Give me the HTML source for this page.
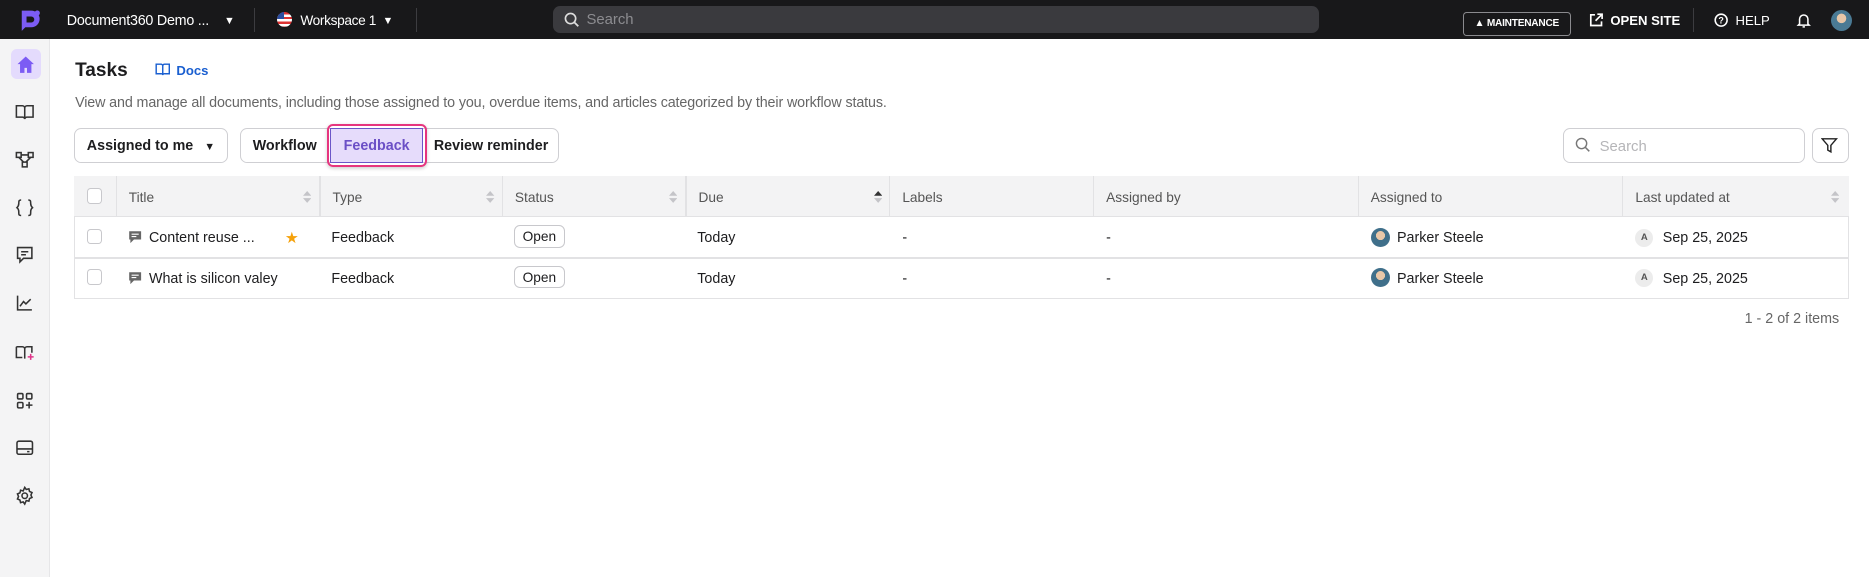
<!DOCTYPE html>
<html><head><meta charset="utf-8"><style>
*{box-sizing:border-box;margin:0;padding:0}
html,body{width:1869px;height:577px;overflow:hidden;background:#fff}
#z{zoom:1.19196;width:1568px;height:484px;position:relative;font-family:"Liberation Sans",sans-serif;color:#1d1d1f;overflow:hidden}
.abs{position:absolute}
.top{left:0;top:0;width:1568px;height:33px;background:#18181a;color:#fff}
.top .t{position:absolute;top:11px;font-size:12px;white-space:nowrap}
.sep{position:absolute;top:7px;width:1px;height:20px;background:#3c3c40}
.side{left:0;top:33px;width:42px;height:451px;background:#f4f4f5;border-right:1px solid #e6e6e8}
.ic{position:absolute;left:12px;width:18px;height:18px}
.btn{position:absolute;top:107px;height:30px;border:1px solid #cfcfd3;border-radius:6px;background:#fff;font-size:12px;font-weight:bold;line-height:29px}
.th{position:absolute;top:149px;height:34px;line-height:34px;font-size:11.5px;color:#555}
.cell{position:absolute;font-size:12px;color:#1d1d1f;white-space:nowrap}
.vl{position:absolute;top:148px;width:1px;height:34px;background:#e2e2e4}
.hl{position:absolute;left:62px;width:1489px;height:1px;background:#e2e2e4}
.cb{position:absolute;left:73px;width:13px;height:13px;border:1px solid #c8c8cc;border-radius:3px;background:#fff}
.sort{position:absolute;width:7px;height:10px}
.open{position:absolute;left:431px;height:19px;width:43px;border:1px solid #c8c8cc;border-radius:5px;font-size:11.5px;line-height:18px;text-align:center}
.av{position:absolute;left:1150px;width:16px;height:16px;border-radius:50%;background:radial-gradient(circle at 50% 40%,#e8c7a8 0 30%,#3f6f8a 31%)}
.aa{position:absolute;left:1372px;width:15px;height:15px;border-radius:50%;background:#ececec;font-size:8px;font-weight:bold;color:#555;text-align:center;line-height:15px}
</style></head><body><div id="z">
<div class="abs top">
 <svg class="abs" style="left:14px;top:6px" width="22" height="22" viewBox="0 0 22 22"><path d="M4 3h8a7 7 0 0 1 0 14H7l-3 3z" fill="#7c5cf4"/><path d="M8 8h4a2 2 0 0 1 0 5H8z" fill="#18181a"/><circle cx="17" cy="5" r="2.2" fill="#7c5cf4"/></svg>
 <span class="t" style="left:56px;letter-spacing:-0.2px">Document360 Demo ...</span>
 <span class="t" style="left:188px;font-size:9px;top:13px">▼</span>
 <div class="sep" style="left:213px"></div>
 <div class="abs" style="left:232px;top:10px;width:13px;height:13px;border-radius:50%;overflow:hidden;background:repeating-linear-gradient(#d33 0 2px,#fff 2px 4px)"><div style="width:6px;height:6px;background:#2b4ea0"></div></div>
 <span class="t" style="left:252px;font-size:11.5px;letter-spacing:-0.3px">Workspace 1</span>
 <span class="t" style="left:321px;font-size:9px;top:13px">▼</span>
 <div class="sep" style="left:349px"></div>
 <div class="abs" style="left:464px;top:5px;width:643px;height:23px;background:#3a3a3e;border-radius:6px"></div>
 <svg class="abs" style="left:473px;top:10px" width="13" height="13" viewBox="0 0 13 13"><circle cx="5.5" cy="5.5" r="4.3" stroke="#ddd" stroke-width="1.4" fill="none"/><path d="M8.7 8.7 12 12" stroke="#ddd" stroke-width="1.5"/></svg>
 <span class="t" style="left:492px;top:10px;color:#8c8c90;font-size:12.5px">Search</span>
 <div class="abs" style="left:1227px;top:10px;width:91px;height:20px;border:1px solid #8a8a8e;border-radius:3px;font-size:8.5px;font-weight:bold;line-height:18px;text-align:center;letter-spacing:-0.2px">▲ MAINTENANCE</div>
 <svg class="abs" style="left:1333px;top:11px" width="12" height="12" viewBox="0 0 12 12" fill="none" stroke="#fff" stroke-width="1.4"><path d="M5 1.5H1.5v9h9V7M7 1h4v4M11 1 5.5 6.5"/></svg>
 <span class="t" style="left:1351px;top:11px;font-size:11px;font-weight:bold">OPEN SITE</span>
 <div class="sep" style="left:1420px"></div>
 <svg class="abs" style="left:1438px;top:11px" width="12" height="12" viewBox="0 0 12 12"><circle cx="6" cy="6" r="5" stroke="#fff" stroke-width="1.3" fill="none"/><text x="6" y="9" font-size="7.5" text-anchor="middle" fill="#fff" font-family="Liberation Sans" font-weight="bold">?</text></svg>
 <span class="t" style="left:1456px;top:11px;font-size:11px">HELP</span>
 <svg class="abs" style="left:1507px;top:10px" width="13" height="14" viewBox="0 0 13 14" fill="none" stroke="#fff" stroke-width="1.3"><path d="M3 10V6a3.5 3.5 0 0 1 7 0v4l1 1H2zM5.5 12.5h2"/></svg>
 <div class="abs" style="left:1536px;top:8px;width:18px;height:18px;border-radius:50%;background:radial-gradient(circle at 50% 40%,#e8c7a8 0 28%,#4a7a94 30%)"></div>
</div>
<div class="abs side">
 <div class="abs" style="left:9px;top:8px;width:25px;height:25px;border-radius:5px;background:#e4dbfd"></div>
 <svg class="ic" style="top:12px;left:13px" width="17" height="17" viewBox="0 0 17 17"><path d="M8.5 2 2 8h2v7h3.5v-4h2v4H13V8h2z" fill="#7c5cf4"/></svg>
 <svg class="ic" style="top:52px" viewBox="0 0 18 18" fill="none" stroke="#333" stroke-width="1.3"><path d="M2 4h5a2 2 0 0 1 2 2v9a2 2 0 0 0-2-1.5H2zM16 4h-5a2 2 0 0 0-2 2v9a2 2 0 0 1 2-1.5h5z"/></svg>
 <svg class="ic" style="top:92px" viewBox="0 0 18 18" fill="none" stroke="#333" stroke-width="1.3"><rect x="2" y="3" width="4" height="4"/><rect x="12" y="3" width="4" height="4"/><rect x="7" y="11" width="4" height="4"/><path d="M6 5h6M4 7l4 4M14 7l-4 4"/></svg>
 <svg class="ic" style="top:132px" viewBox="0 0 18 18" fill="none" stroke="#333" stroke-width="1.3"><path d="M6 2.5c-2 0-2 1-2 3s-1.5 3.5-1.5 3.5S4 10 4 12.5 4 15.5 6 15.5M12 2.5c2 0 2 1 2 3s1.5 3.5 1.5 3.5S14 10 14 12.5s0 3-2 3"/></svg>
 <svg class="ic" style="top:172px" viewBox="0 0 18 18" fill="none" stroke="#333" stroke-width="1.3"><path d="M3 3h12v9H8l-3 3v-3H3zM6 6.5h6M6 9h4"/></svg>
 <svg class="ic" style="top:212px" viewBox="0 0 18 18" fill="none" stroke="#333" stroke-width="1.3"><path d="M3 3v12h12M5 12l3-4 2 2 4-4"/></svg>
 <svg class="ic" style="top:254px" viewBox="0 0 18 18" fill="none" stroke="#333" stroke-width="1.3"><path d="M2 4h5a2 2 0 0 1 2 2v8M2 4v9h5M9 6a2 2 0 0 1 2-2h4v5"/><path d="M14 10v5M11.5 12.5h5" stroke="#e0368a"/></svg>
 <svg class="ic" style="top:294px" viewBox="0 0 18 18" fill="none" stroke="#333" stroke-width="1.3"><rect x="3" y="3" width="4.5" height="4.5" rx="1"/><rect x="10.5" y="3" width="4.5" height="4.5" rx="1"/><rect x="3" y="10.5" width="4.5" height="4.5" rx="1"/><path d="M12.7 10v5.5M10 12.7h5.5"/></svg>
 <svg class="ic" style="top:334px" viewBox="0 0 18 18" fill="none" stroke="#333" stroke-width="1.3"><rect x="2.5" y="3.5" width="13" height="11" rx="1.5"/><path d="M2.5 10h13M11 12.3h2"/></svg>
 <svg class="ic" style="top:374px" viewBox="0 0 18 18" fill="none" stroke="#333" stroke-width="1.3"><circle cx="9" cy="9" r="2.3"/><path d="M9 2l1.3 1.8 2.2-.6.5 2.2 2.1.9-.9 2.1.9 2.1-2.1.9-.5 2.2-2.2-.6L9 16l-1.3-1.8-2.2.6-.5-2.2-2.1-.9.9-2.1-.9-2.1 2.1-.9.5-2.2 2.2.6z"/></svg>
</div>

<div class="abs" style="left:63px;top:50px;font-size:16px;font-weight:bold">Tasks</div>
<svg class="abs" style="left:130px;top:53px" width="13" height="11" viewBox="0 0 13 11" fill="none" stroke="#1a5fd0" stroke-width="1.2"><path d="M1 1h4a1.5 1.5 0 0 1 1.5 1.5V10A1.5 1.5 0 0 0 5 9H1zM12 1H8a1.5 1.5 0 0 0-1.5 1.5V10A1.5 1.5 0 0 1 8 9h4z"/></svg>
<div class="abs" style="left:148px;top:53px;font-size:11px;font-weight:bold;color:#1a5fd0">Docs</div>
<div class="abs" style="left:63px;top:80px;font-size:12px;color:#666;white-space:nowrap;letter-spacing:-0.1px">View and manage all documents, including those assigned to you, overdue items, and articles categorized by their workflow status.</div>

<div class="btn" style="left:62px;width:129px;padding-left:10px">Assigned to me <span style="font-size:9px;margin-left:6px">▼</span></div>
<div class="btn" style="left:201px;width:268px"></div>
<div class="abs" style="left:212px;top:116px;font-size:12px;font-weight:bold">Workflow</div>
<div class="abs" style="left:274px;top:104px;width:84px;height:36px;border:2px solid #e6357f;border-radius:5px;box-shadow:0 1px 3px rgba(0,0,0,.2)"></div>
<div class="abs" style="left:277px;top:107px;width:78px;height:30px;border:1px solid #6b56c8;background:#e6dcfb;color:#6b4fc6;font-size:12px;font-weight:bold;line-height:29px;text-align:center">Feedback</div>
<div class="abs" style="left:364px;top:116px;font-size:12px;font-weight:bold">Review reminder</div>

<div class="abs" style="left:1311px;top:107px;width:203px;height:30px;border:1px solid #cfcfd3;border-radius:6px"></div>
<svg class="abs" style="left:1321px;top:115px" width="13" height="13" viewBox="0 0 13 13"><circle cx="5.5" cy="5.5" r="4.3" stroke="#777" stroke-width="1.2" fill="none"/><path d="M8.7 8.7 12 12" stroke="#777" stroke-width="1.3"/></svg>
<div class="abs" style="left:1342px;top:117px;font-size:12.5px;color:#b5b5b8">Search</div>
<div class="abs" style="left:1520px;top:107px;width:31px;height:30px;border:1px solid #cfcfd3;border-radius:6px"></div>
<svg class="abs" style="left:1528px;top:115px" width="14" height="14" viewBox="0 0 14 14" fill="none" stroke="#222" stroke-width="1.2"><path d="M1 1.5h12L8.3 7v5.5L5.7 11V7z"/></svg>

<div class="abs" style="left:62px;top:148px;width:1489px;height:103px;border:1px solid #e2e2e4"></div>
<div class="abs" style="left:62px;top:148px;width:1489px;height:34px;background:#f3f3f4"></div>
<div class="hl" style="top:181px"></div><div class="hl" style="top:216px"></div><div class="hl" style="top:250px"></div>
<div class="vl" style="left:97px"></div><div class="vl" style="left:268px"></div><div class="vl" style="left:421px"></div><div class="vl" style="left:575px"></div><div class="vl" style="left:746px"></div><div class="vl" style="left:917px"></div><div class="vl" style="left:1139px"></div><div class="vl" style="left:1361px"></div>
<div class="cb" style="top:158px"></div><div class="cb" style="top:192px"></div><div class="cb" style="top:226px"></div>
<div class="th" style="left:108px">Title</div><div class="th" style="left:279px">Type</div><div class="th" style="left:432px">Status</div><div class="th" style="left:586px">Due</div><div class="th" style="left:757px">Labels</div><div class="th" style="left:928px">Assigned by</div><div class="th" style="left:1150px">Assigned to</div><div class="th" style="left:1372px">Last updated at</div>
<svg class="sort" style="left:254px;top:160px" viewBox="0 0 7 10"><path d="M3.5 0 7 4H0zM3.5 10 7 6H0z" fill="#c4c4c8"/></svg>
<svg class="sort" style="left:408px;top:160px" viewBox="0 0 7 10"><path d="M3.5 0 7 4H0zM3.5 10 7 6H0z" fill="#c4c4c8"/></svg>
<svg class="sort" style="left:561px;top:160px" viewBox="0 0 7 10"><path d="M3.5 0 7 4H0zM3.5 10 7 6H0z" fill="#c4c4c8"/></svg>
<svg class="sort" style="left:733px;top:160px" viewBox="0 0 7 10"><path d="M3.5 0 7 4H0z" fill="#333"/><path d="M3.5 10 7 6H0z" fill="#c4c4c8"/></svg>
<svg class="sort" style="left:1536px;top:160px" viewBox="0 0 7 10"><path d="M3.5 0 7 4H0zM3.5 10 7 6H0z" fill="#c4c4c8"/></svg>

<svg class="abs" style="left:107px;top:193px" width="12" height="12" viewBox="0 0 12 12"><path d="M1 1h10v7H5l-3 3V8H1z" fill="#666"/><path d="M3 3.5h6M3 5.5h4" stroke="#fff"/></svg>
<svg class="abs" style="left:107px;top:227px" width="12" height="12" viewBox="0 0 12 12"><path d="M1 1h10v7H5l-3 3V8H1z" fill="#666"/><path d="M3 3.5h6M3 5.5h4" stroke="#fff"/></svg>
<div class="cell" style="left:125px;top:193px">Content reuse ...</div>
<div class="cell" style="left:239px;top:192px;color:#f5a10a;font-size:13px">★</div>
<div class="cell" style="left:125px;top:227px">What is silicon valey</div>
<div class="cell" style="left:278px;top:193px">Feedback</div><div class="cell" style="left:278px;top:227px">Feedback</div>
<div class="open" style="top:189px">Open</div><div class="open" style="top:223px">Open</div>
<div class="cell" style="left:585px;top:193px">Today</div><div class="cell" style="left:585px;top:227px">Today</div>
<div class="cell" style="left:757px;top:193px">-</div><div class="cell" style="left:757px;top:227px">-</div>
<div class="cell" style="left:928px;top:193px">-</div><div class="cell" style="left:928px;top:227px">-</div>
<div class="av" style="top:191px"></div><div class="av" style="top:225px"></div>
<div class="cell" style="left:1172px;top:193px">Parker Steele</div><div class="cell" style="left:1172px;top:227px">Parker Steele</div>
<div class="aa" style="top:192px">A</div><div class="aa" style="top:226px">A</div>
<div class="cell" style="left:1395px;top:193px">Sep 25, 2025</div><div class="cell" style="left:1395px;top:227px">Sep 25, 2025</div>
<div class="abs" style="right:25px;top:261px;font-size:12px;color:#666">1 - 2 of 2 items</div>
</div></body></html>
